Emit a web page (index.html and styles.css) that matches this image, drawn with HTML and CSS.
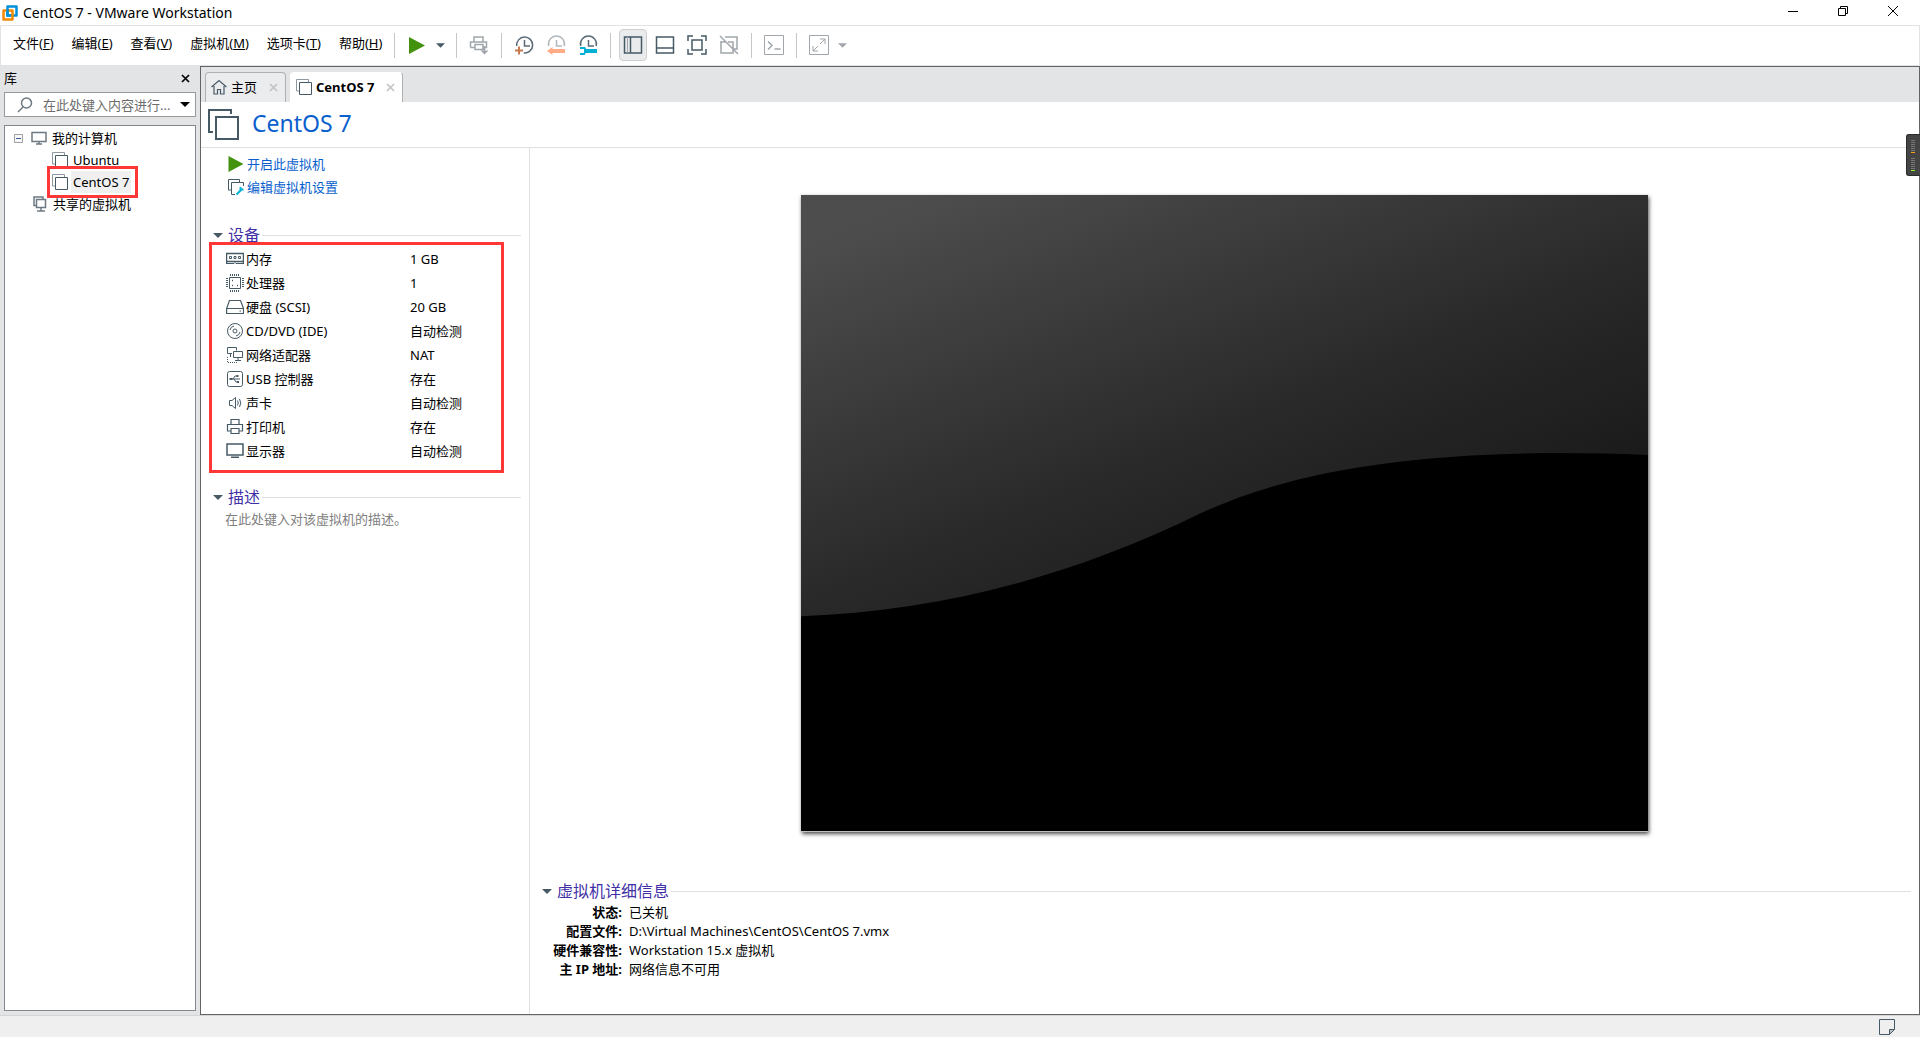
FILE: index.html
```html
<!DOCTYPE html>
<html lang="zh-CN">
<head>
    <meta charset="UTF-8">
    <meta name="viewport" content="width=device-width, initial-scale=1.0">
    <title>CentOS 7 - VMware Workstation</title>
    <link rel="stylesheet" href="styles.css">
</head>
<body>

    <!-- shared icons -->
    <svg class="defs" aria-hidden="true">
        <symbol id="i-vm" viewBox="0 0 16 16">
            <path d="M3 12H.5V.5h12V3" fill="none" stroke="#8e989f"/>
            <path d="M3.5 3.5h12v12h-12z" fill="none" stroke="#465a66"/>
        </symbol>
        <symbol id="i-play" viewBox="0 0 16 17">
            <path d="M0 0l16 8.5L0 17z" fill="#43920e"/>
        </symbol>
        <symbol id="i-close" viewBox="0 0 9 9">
            <path d="M1 1l7 7M8 1L1 8" fill="none" stroke="currentColor" stroke-width="1.7"/>
        </symbol>
        <symbol id="i-caret" viewBox="0 0 10 5">
            <path d="M0 0h10L5 5z" fill="currentColor"/>
        </symbol>
    </svg>

    <header class="titlebar">
        <svg class="logo" viewBox="0 0 16 16">
            <path d="M5.5 1.5h9v9h-9z" fill="none" stroke="#0091da" stroke-width="2.5" stroke-linejoin="round"/>
            <path d="M1.5 5.5h9v9h-9z" fill="none" stroke="#f38b00" stroke-width="2.5" stroke-linejoin="round"/>
            <path d="M5.5 4v6.5H9" fill="none" stroke="#0091da" stroke-width="2.5"/>
        </svg>
        <h1>CentOS 7 - VMware Workstation</h1>
        <div class="window-buttons">
            <button aria-label="最小化"><svg viewBox="0 0 10 10"><path d="M0 5.5h10" stroke="#000"/></svg></button>
            <button aria-label="还原"><svg viewBox="0 0 10 10"><path d="M.5 2.5h7v7h-7zM2.5 2.5v-2h7v7h-2" fill="none" stroke="#000"/></svg></button>
            <button aria-label="关闭"><svg viewBox="0 0 10 10"><path d="M0 0l10 10M10 0L0 10" stroke="#000"/></svg></button>
        </div>
    </header>

    <div class="menubar">
        <nav class="menu">
            <button>文件(<u>F</u>)</button>
            <button>编辑(<u>E</u>)</button>
            <button>查看(<u>V</u>)</button>
            <button>虚拟机(<u>M</u>)</button>
            <button>选项卡(<u>T</u>)</button>
            <button>帮助(<u>H</u>)</button>
        </nav>
        <div class="toolbar">
            <span class="sep"></span>
            <button class="tool" aria-label="开启"><svg class="play"><use href="#i-play"/></svg></button>
            <button class="tool-caret" aria-label="电源选项"><svg class="caret"><use href="#i-caret"/></svg></button>
            <span class="sep"></span>
            <button class="tool" aria-label="发送">
                <svg viewBox="0 0 20 20" fill="none" stroke="#a0a6ab" stroke-width="1.5">
                    <path d="M5 7V2h9v5M1.5 12.5V7h16v5.5H14M1.5 12.5H6M6 9.500h8v5H6zM15.500 11v6"/>
                    <path d="M11.500 15.500h8l-4 4z" fill="#a0a6ab" stroke="none"/>
                </svg>
            </button>
            <span class="sep"></span>
            <button class="tool" aria-label="拍摄快照">
                <svg viewBox="0 0 20 20" fill="none" stroke="#5b6c77" stroke-width="1.5">
                    <path d="M2.7 11a8 8 0 1 1 7 7"/><path d="M10.5 5v6H16"/>
                    <path d="M1 15.5h8M5 11.5v8" stroke="#c77a50" stroke-width="2"/>
                </svg>
            </button>
            <button class="tool" aria-label="恢复快照">
                <svg viewBox="0 0 20 20" fill="none" stroke="#b4b9bd" stroke-width="1.5">
                    <path d="M2.7 11a8 8 0 1 1 15.5 0"/><path d="M10.5 5v6H16"/>
                    <path d="M5 16h14" stroke="#ffab85" stroke-width="4"/>
                    <path d="M6.5 12v8L1 16z" fill="#ffab85" stroke="none"/>
                </svg>
            </button>
            <button class="tool" aria-label="管理快照">
                <svg viewBox="0 0 20 20" fill="none" stroke="#5b6c77" stroke-width="1.5">
                    <path d="M2.7 11a8 8 0 1 1 15.5 0"/><path d="M10.5 5v6H16"/>
                    <path d="M6 16h13" stroke="#00b0d6" stroke-width="4"/>
                    <path d="M2 13h4.5L8 16l-2 3H2" stroke="#00b0d6" stroke-width="2"/>
                </svg>
            </button>
            <span class="sep"></span>
            <button class="tool active" aria-label="显示库">
                <svg viewBox="0 0 20 20" fill="none" stroke="#465a66" stroke-width="1.5">
                    <path d="M1.5 2h17v16h-17z"/><path d="M4.5 2v16" stroke-width="1" stroke="#a0a6ab"/><path d="M7.5 2v16"/>
                </svg>
            </button>
            <button class="tool" aria-label="显示缩略图">
                <svg viewBox="0 0 20 20" fill="none" stroke="#465a66" stroke-width="1.5">
                    <path d="M1.5 2h17v16h-17zM1.5 13h17"/>
                </svg>
            </button>
            <button class="tool" aria-label="全屏">
                <svg viewBox="0 0 20 20" fill="none" stroke="#465a66" stroke-width="1.5">
                    <path d="M1 6V1h5M14 1h5v5M19 14v5h-5M6 19H1v-5M5 5h10v10H5z"/>
                </svg>
            </button>
            <button class="tool" aria-label="Unity">
                <svg viewBox="0 0 20 20" fill="none" stroke="#a0a6ab" stroke-width="1.5">
                    <path d="M6 2h12v12h-4M2 7h4M2 6v12h12V7H9M1 1l18 18"/>
                </svg>
            </button>
            <span class="sep"></span>
            <button class="tool" aria-label="控制台">
                <svg viewBox="0 0 20 20" fill="none" stroke="#a0a6ab">
                    <path d="M.5.5h19v19H.5z"/><path d="M4 6.5l4 4-4 4M10.5 14h6" stroke-width="1.5"/>
                </svg>
            </button>
            <span class="sep"></span>
            <button class="tool" aria-label="自由拉伸">
                <svg viewBox="0 0 20 20" fill="none" stroke="#a0a6ab">
                    <path d="M.5.5h19v19H.5z"/><path d="M4 11v5h5M11 4h5v5M4 16l5-5M11 9l5-5"/>
                </svg>
            </button>
            <button class="tool-caret muted" aria-label="拉伸选项"><svg class="caret"><use href="#i-caret"/></svg></button>
        </div>
    </div>

    <div class="workspace">
        <aside class="library">
            <div class="library-head">
                <h2>库</h2>
                <button aria-label="关闭库"><svg class="close"><use href="#i-close"/></svg></button>
            </div>
            <div class="search">
                <svg class="lens" viewBox="0 0 16 16" fill="none" stroke="#6d7880" stroke-width="1.5">
                    <circle cx="9.5" cy="6" r="5"/><path d="M6 10l-5 5"/>
                </svg>
                <input type="text" aria-label="搜索" placeholder="在此处键入内容进行...">
                <button aria-label="搜索选项"><svg class="caret"><use href="#i-caret"/></svg></button>
            </div>
            <ul class="tree">
                <li>
                    <svg class="expander" viewBox="0 0 9 9"><path d="M.5.5h8v8h-8z" fill="#f8f8f8" stroke="#a0a0a0"/><path d="M2 4.5h5" stroke="#3b5998"/></svg>
                    <svg class="icon" viewBox="0 0 16 16" fill="none" stroke="#6d7a83" stroke-width="1.5"><path d="M1 2.5h14v9H1zM8 11v3M5 14h6"/></svg>
                    <span>我的计算机</span>
                </li>
                <li class="child">
                    <svg class="icon"><use href="#i-vm"/></svg>
                    <span>Ubuntu</span>
                </li>
                <li class="child selected">
                    <svg class="icon"><use href="#i-vm"/></svg>
                    <span>CentOS 7</span>
                </li>
                <li class="shared">
                    <svg class="icon" viewBox="0 0 16 16" fill="none" stroke="#6d7a83" stroke-width="1.5"><path d="M4 9.5H2V1h9v2M4.5 3.5h9v8h-9zM9 11.5v3M5 15h8"/></svg>
                    <span>共享的虚拟机</span>
                </li>
            </ul>
        </aside>

        <main class="main">
            <div class="tabs">
                <button class="tab">
                    <svg class="home" viewBox="0 0 16 16" fill="none" stroke="#465a66" stroke-width="1.2"><path d="M.5 8L8 1.5 15.5 8M3 7v8h3.5v-4.5h3V15H13V7"/></svg>
                    <span>主页</span>
                    <svg class="close"><use href="#i-close"/></svg>
                </button>
                <button class="tab current">
                    <svg class="icon"><use href="#i-vm"/></svg>
                    <span>CentOS 7</span>
                    <svg class="close"><use href="#i-close"/></svg>
                </button>
            </div>

            <div class="vm-head">
                <svg viewBox="0 0 32 32" fill="none" stroke="#465a66" stroke-width="2"><path d="M5 23H1V1h22v4M8 8h22v22H8z"/></svg>
                <h2>CentOS 7</h2>
            </div>

            <div class="vm-body">
                <section class="summary">
                    <div class="actions">
                        <a href="#"><svg><use href="#i-play"/></svg>开启此虚拟机</a>
                        <a href="#">
                            <svg viewBox="0 0 16 16" fill="none" stroke="#465a66"><path d="M3 11H.5V.5h11V3M7 15.5H3.5v-12h12V7"/><path d="M8.5 15.5L13 11M15.5 10.5h-3V8" stroke="#00b0d6" stroke-width="2"/></svg>编辑虚拟机设置
                        </a>
                    </div>

                    <h3 class="group"><svg class="caret"><use href="#i-caret"/></svg>设备</h3>
                    <table class="devices">
                        <tr>
                            <th><svg viewBox="0 0 18 18" fill="none" stroke="#465a66"><path d="M.5 3v11M17.5 3v11M0 3.5h18M0 11.5h18" stroke-width="1.5"/><path d="M0 13.5h8l1-1 1 1h8M3.5 6.5h2v2h-2zM8 6.5h2v2H8zM12.5 6.5h2v2h-2z"/></svg></th>
                            <td class="device">内存</td><td>1 GB</td>
                        </tr>
                        <tr>
                            <th><svg viewBox="0 0 18 18" fill="none" stroke="#465a66"><path d="M3.5 3.5h11v11h-11z"/><path d="M4 1h10M4 17h10M1 4v10M17 4v10" stroke-width="2" stroke-dasharray="1 1"/><path d="M6 6.5h1M11 11.5h1M6 11.5h1" stroke-width="1.5"/></svg></th>
                            <td class="device">处理器</td><td>1</td>
                        </tr>
                        <tr>
                            <th><svg viewBox="0 0 18 18" fill="none" stroke="#465a66" stroke-width="1.2"><path d="M3.5 2.5h11l3 8v5H.6v-5zM.6 10.5h17M13.5 13h1.5"/></svg></th>
                            <td class="device">硬盘 (SCSI)</td><td>20 GB</td>
                        </tr>
                        <tr>
                            <th><svg viewBox="0 0 18 18" fill="none" stroke="#465a66"><circle cx="9" cy="9" r="7.5"/><circle cx="9" cy="9" r="2"/><path d="M4 8a5 5 0 0 1 4-4M14 10a5 5 0 0 1-4 4"/></svg></th>
                            <td class="device">CD/DVD (IDE)</td><td>自动检测</td>
                        </tr>
                        <tr>
                            <th><svg viewBox="0 0 18 18" fill="none" stroke="#465a66"><path d="M6 7.5H1.5v-6h9v3M7.5 5.5h9v6h-9zM12 11.5v3M9 14.5h6M4.5 8v3"/><path d="M1.5 11v5.5H12" stroke-dasharray="1 1"/></svg></th>
                            <td class="device">网络适配器</td><td>NAT</td>
                        </tr>
                        <tr>
                            <th><svg viewBox="0 0 18 18" fill="none" stroke="#465a66"><rect x="1.5" y="1.5" width="15" height="15" rx="2"/><path d="M5 9h9M7 9l2-3h2M8 9l2 3h2"/><path d="M3.5 8h3v2h-3zM10.5 5h2v2h-2zM11 11h2v2h-2z" fill="#465a66" stroke="none"/></svg></th>
                            <td class="device">USB 控制器</td><td>存在</td>
                        </tr>
                        <tr>
                            <th><svg viewBox="0 0 18 18" fill="none" stroke="#465a66"><path d="M3.5 6.5H6l3.5-3v11L6 11.5H3.5zM11.5 6.5q1.5 2.5 0 5M13.5 5q2.5 4 0 8"/></svg></th>
                            <td class="device">声卡</td><td>自动检测</td>
                        </tr>
                        <tr>
                            <th><svg viewBox="0 0 18 18" fill="none" stroke="#465a66" stroke-width="1.2"><path d="M5 6.5v-5h8v5M5 13H1.5V6.5h15V13H13M5 10.5h8v5H5z"/></svg></th>
                            <td class="device">打印机</td><td>存在</td>
                        </tr>
                        <tr>
                            <th><svg viewBox="0 0 18 18" fill="none" stroke="#465a66" stroke-width="1.5"><path d="M1 2h16v11H1zM5 15.2h8"/></svg></th>
                            <td class="device">显示器</td><td>自动检测</td>
                        </tr>
                    </table>

                    <h3 class="group"><svg class="caret"><use href="#i-caret"/></svg>描述</h3>
                    <p class="description">在此处键入对该虚拟机的描述。</p>
                </section>

                <section class="overview">
                    <div class="screen-area">
                        <svg class="screen" viewBox="0 0 847 636">
                            <defs>
                                <linearGradient id="shade" gradientUnits="userSpaceOnUse" x1="30" y1="40" x2="225" y2="514">
                                    <stop offset="0" stop-color="#4d4d4d"/>
                                    <stop offset="0.67" stop-color="#282828"/>
                                    <stop offset="1" stop-color="#1b1b1b"/>
                                </linearGradient>
                            </defs>
                            <path d="M0 0h847v636H0z" fill="#000"/>
                            <path d="M0 0H847V260Q800 258 760 258C610 258 490 276 400 318C270 382 135 417 0 421z" fill="url(#shade)"/>
                        </svg>
                    </div>
                    <div class="details">
                        <h3 class="group"><svg class="caret"><use href="#i-caret"/></svg>虚拟机详细信息</h3>
                        <dl>
                            <dt>状态:</dt><dd>已关机</dd>
                            <dt>配置文件:</dt><dd>D:\Virtual Machines\CentOS\CentOS 7.vmx</dd>
                            <dt>硬件兼容性:</dt><dd>Workstation 15.x 虚拟机</dd>
                            <dt>主 IP 地址:</dt><dd>网络信息不可用</dd>
                        </dl>
                    </div>
                </section>
            </div>
        </main>
    </div>

    <footer class="statusbar">
        <svg viewBox="0 0 16 16" fill="none" stroke="#465a66"><path d="M.5.5h15v10l-5 5H.5z"/><path d="M10.5 15.5v-5h5z" fill="#b9c1c6"/></svg>
    </footer>

    <div class="meter">
        <i></i><i></i><i></i><i></i><i></i><i></i><i class="orange"></i>
        <b></b>
        <i></i><i></i><i></i><i></i><i></i><i></i><i class="green"></i>
    </div>

</body>
</html>
```
FILE: styles.css
```css
* {
    box-sizing: border-box;
}

body {
    margin: 0;
    height: 100vh;
    display: flex;
    flex-direction: column;
    background: white;
    color: black;
    font-family: "Noto Sans", "Noto Sans CJK SC", sans-serif;
    font-size: 13px;
    line-height: 18px;
    overflow: hidden;
}

h1, h2, h3, p, ul, dl, dd {
    margin: 0;
    padding: 0;
    font-size: 13px;
    font-weight: normal;
}

button {
    border: 0;
    padding: 0;
    background: none;
    color: inherit;
    font: inherit;
}

svg {
    flex: none;
    display: block;
}

.defs {
    position: absolute;
    width: 0;
    height: 0;
}

.icon {
    width: 16px;
    height: 16px;
}

.close {
    width: 9px;
    height: 9px;
}

.caret {
    width: 10px;
    height: 5px;
}

/* Title bar */
.titlebar {
    display: flex;
    align-items: center;
    height: 25px;
    padding: 0 2px;
}

.titlebar h1 {
    font-size: 14px;
}

.logo {
    width: 16px;
    height: 16px;
    margin-right: 5px;
}

.window-buttons {
    display: flex;
    align-self: flex-start;
    margin-left: auto;
}

.window-buttons button {
    display: flex;
    justify-content: center;
    align-items: center;
    width: 50px;
    height: 22px;
}

.window-buttons svg {
    width: 10px;
    height: 10px;
}

/* Menu and toolbar */
.menubar {
    display: flex;
    align-items: center;
    height: 41px;
    padding-bottom: 1px;
    border: 1px solid #e3e3e3;
}

.menu {
    display: flex;
    gap: 18px;
    padding: 0 12px 4px;
}

.toolbar {
    display: flex;
    align-items: center;
}

.sep {
    width: 1px;
    height: 25px;
    margin: 0 6px;
    background: #c6c6c6;
}

.toolbar .sep:first-child {
    margin-left: 0;
}

.tool, .tool-caret {
    display: flex;
    justify-content: center;
    align-items: center;
    width: 32px;
    height: 32px;
}

.tool-caret {
    width: 17px;
    padding-right: 3px;
    color: #465a66;
}

.tool-caret.muted {
    color: #a0a6ab;
}

.tool-caret .caret {
    width: 9px;
}

.tool svg {
    width: 20px;
    height: 20px;
}

.tool .play {
    width: 16px;
    height: 17px;
}

.active {
    width: 28px;
    margin: 0 2px;
    background: #eaebec;
    border: 1px solid #cfcfcf;
    border-radius: 4px;
}

/* Library */
.workspace {
    flex: 1;
    display: flex;
    min-height: 0;
    background: #e3e4e6;
}

.library {
    width: 200px;
    display: flex;
    flex-direction: column;
    padding: 0 4px 4px;
}

.library-head {
    display: flex;
    justify-content: space-between;
    align-items: center;
    height: 26px;
    padding: 0 6px 2px 0;
}

.search {
    display: flex;
    align-items: center;
    height: 25px;
    padding: 0 5px 0 12px;
    background: white;
    border: 1px solid #999;
}

.lens {
    width: 16px;
    height: 16px;
}

.search input {
    flex: 1;
    min-width: 0;
    margin-left: 10px;
    padding: 0;
    border: 0;
    background: none;
    font: inherit;
}

.search input::placeholder {
    color: #6d6d6d;
}

.tree {
    flex: 1;
    margin-top: 8px;
    padding: 1px 0;
    background: white;
    border: 1px solid #828790;
    list-style: none;
}

.tree li {
    position: relative;
    display: flex;
    align-items: center;
    height: 22px;
    padding-left: 9px;
}

.tree .expander {
    width: 9px;
    height: 9px;
    margin-right: 8px;
}

.tree span {
    margin-left: 3px;
    padding: 0 2px;
    line-height: 22px;
}

.tree .shared {
    padding-left: 27px;
}

.tree .child {
    padding-left: 47px;
}

.tree .selected span {
    background: #f0f0f0;
}

/* red highlight frames */
.selected::after, .devices::after {
    content: "";
    position: absolute;
    border: 3px solid #ff3737;
}

.selected::after {
    left: 42px;
    top: -5px;
    width: 85px;
    height: 26px;
}

.devices::after {
    inset: -5px 25px -10px 8px;
}

/* Main area */
.main {
    flex: 1;
    min-width: 0;
    display: flex;
    flex-direction: column;
    background: white;
    border: 1px solid #646464;
}

.tabs {
    display: flex;
    align-items: flex-end;
    gap: 4px;
    height: 35px;
    padding-left: 4px;
    background: #e3e4e6;
}

.tab {
    display: flex;
    align-items: center;
    height: 30px;
    padding: 0 7px 1px 5px;
    background: #ebecee;
    border: 1px solid #b0b0b0;
    border-bottom: 0;
    border-radius: 4px 4px 0 0;
}

.tab span {
    padding: 0 12px 0 4px;
}

.tab .close {
    color: #c4c4c4;
}

.home {
    width: 16px;
    height: 16px;
}

.tab.current {
    background: white;
    border-left-color: white;
    border-top-color: white;
    font-weight: bold;
}

.vm-head {
    display: flex;
    align-items: center;
    gap: 12px;
    height: 46px;
    padding-left: 7px;
    border-bottom: 1px solid #e0e0e0;
}

.vm-head svg {
    width: 32px;
    height: 32px;
}

.vm-head h2 {
    padding-bottom: 4px;
    color: #0a5fce;
    font-size: 23px;
    line-height: 32px;
}

.vm-body {
    flex: 1;
    min-height: 0;
    display: flex;
}

.summary {
    width: 329px;
    padding-top: 4px;
    border-right: 1px solid #e0e0e0;
}

.actions {
    height: 71px;
    padding-left: 27px;
}

.actions a {
    display: flex;
    align-items: center;
    gap: 3px;
    height: 23px;
    color: #0a5fce;
    text-decoration: none;
}

.actions svg {
    width: 16px;
    height: 16px;
}

.group {
    display: flex;
    align-items: center;
    height: 24px;
    padding: 0 8px 0 12px;
    color: #4130a5;
    font-size: 16px;
}

.group .caret {
    margin-right: 5px;
    color: #465a66;
}

.group::after {
    content: "";
    flex: 1;
    height: 1px;
    margin-left: 2px;
    background: #e0e0e0;
}

.devices {
    position: relative;
    width: 100%;
    margin-bottom: 22px;
    border-collapse: collapse;
    table-layout: fixed;
}

.devices th, .devices td {
    height: 24px;
    padding: 0 0 1px;
}

.devices th {
    width: 45px;
    padding-left: 25px;
}

.devices .device {
    width: 164px;
}

.devices svg {
    width: 18px;
    height: 18px;
}

.description {
    padding: 1px 0 0 24px;
    color: #808080;
}

.overview {
    flex: 1;
    min-width: 0;
    display: flex;
    flex-direction: column;
}

.screen-area {
    flex: 1;
    min-height: 0;
    display: flex;
    justify-content: center;
    align-items: center;
}

.screen {
    width: 61%;
    max-height: 100%;
    box-shadow: 1px 2px 4px rgba(0, 0, 0, 0.7);
}

.details {
    padding-bottom: 35px;
}

.details dl {
    display: grid;
    grid-template-columns: 92px 1fr;
    column-gap: 7px;
}

.details dt, .details dd {
    line-height: 19px;
}

.details dt {
    font-weight: bold;
    text-align: right;
    white-space: nowrap;
}

/* Status bar */
.statusbar {
    display: flex;
    justify-content: flex-end;
    align-items: center;
    height: 22px;
    padding-right: 25px;
    background: #efefef;
    border-top: 1px solid #d5d5d5;
}

.statusbar svg {
    width: 16px;
    height: 16px;
}

/* Meter docked on the window edge */
.meter {
    position: absolute;
    right: 0;
    top: 134px;
    width: 14px;
    height: 42px;
    padding: 5px 5px 5px 4px;
    background: #444;
    border: 1px solid #2b2b2b;
    border-right: 0;
    border-radius: 3px 0 0 3px;
}

.meter i {
    display: block;
    width: 4px;
    height: 1px;
    margin-bottom: 1px;
    background: #777;
}

.meter b {
    display: block;
    height: 4px;
}

.meter .orange {
    background: #ff9c1a;
}

.meter .green {
    background: #8cf01e;
}
```
